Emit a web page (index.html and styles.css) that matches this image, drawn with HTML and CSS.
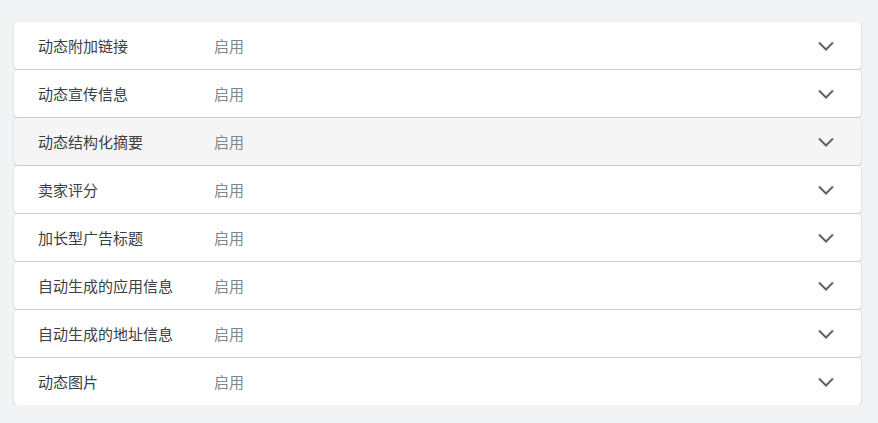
FILE: index.html
```html
<!DOCTYPE html>
<html lang="zh">
<head>
<meta charset="utf-8">
<link rel="stylesheet" href="styles.css">
</head>
<body>
<div class="list">
  <div class="row"><span class="label">动态附加链接</span><span class="value">启用</span><svg class="chev" viewBox="0 0 16 10"><path d="M1 1.5 8 8.5 15 1.5"/></svg></div>
  <div class="row"><span class="label">动态宣传信息</span><span class="value">启用</span><svg class="chev" viewBox="0 0 16 10"><path d="M1 1.5 8 8.5 15 1.5"/></svg></div>
  <div class="row hover"><span class="label">动态结构化摘要</span><span class="value">启用</span><svg class="chev" viewBox="0 0 16 10"><path d="M1 1.5 8 8.5 15 1.5"/></svg></div>
  <div class="row"><span class="label">卖家评分</span><span class="value">启用</span><svg class="chev" viewBox="0 0 16 10"><path d="M1 1.5 8 8.5 15 1.5"/></svg></div>
  <div class="row"><span class="label">加长型广告标题</span><span class="value">启用</span><svg class="chev" viewBox="0 0 16 10"><path d="M1 1.5 8 8.5 15 1.5"/></svg></div>
  <div class="row"><span class="label">自动生成的应用信息</span><span class="value">启用</span><svg class="chev" viewBox="0 0 16 10"><path d="M1 1.5 8 8.5 15 1.5"/></svg></div>
  <div class="row"><span class="label">自动生成的地址信息</span><span class="value">启用</span><svg class="chev" viewBox="0 0 16 10"><path d="M1 1.5 8 8.5 15 1.5"/></svg></div>
  <div class="row"><span class="label">动态图片</span><span class="value">启用</span><svg class="chev" viewBox="0 0 16 10"><path d="M1 1.5 8 8.5 15 1.5"/></svg></div>
</div>
</body>
</html>
```

FILE: styles.css
```css
html, body {
  margin: 0;
  padding: 0;
  background: #f1f3f4;
}
body {
  font-family: "Noto Sans CJK SC", "Noto Sans", sans-serif;
}
.list {
  padding: 22px 17px 0 14px;
  display: flex;
  flex-direction: column;
  gap: 1px;
}
.row {
  height: 47px;
  background: #fff;
  border-radius: 4px;
  box-shadow: 0 1px 2px rgba(60, 64, 67, 0.22), 0 0 1px rgba(60, 64, 67, 0.14);
  display: flex;
  align-items: center;
  padding: 0 27px 0 24px;
}
.row.hover {
  background: #f5f5f5;
}
.label {
  width: 176px;
  font-size: 15px;
  color: #3c4043;
}
.value {
  flex: 1;
  font-size: 15px;
  color: #80868b;
}
.chev {
  width: 16px;
  height: 10px;
  fill: none;
  stroke: #5f6368;
  stroke-width: 2;
}
```
